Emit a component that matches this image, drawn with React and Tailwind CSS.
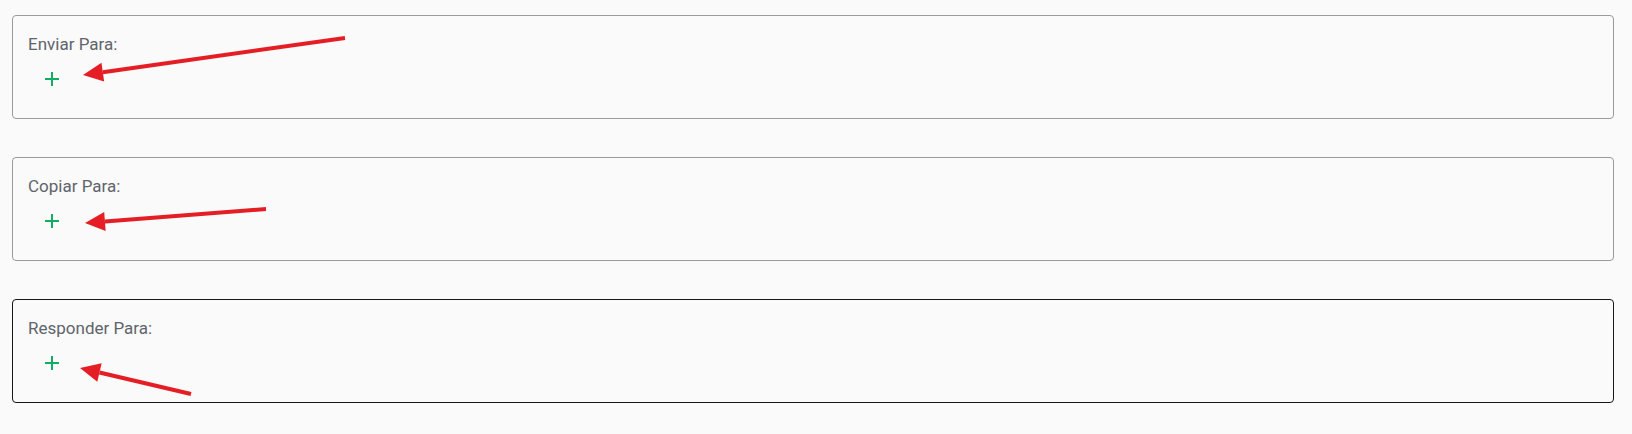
import React from "react";

const sections = [
  { label: "Enviar Para:", border: "border-[#9a9a9a]" },
  { label: "Copiar Para:", border: "border-[#9a9a9a]" },
  { label: "Responder Para:", border: "border-[#161616]" },
];

// red annotation arrows: [tailX, tailY, tipX, tipY]
const arrows = [
  [345, 38, 83, 75],
  [266, 209, 85, 223],
  [191, 394, 80, 368],
];

function Arrow({ a }) {
  const [tx, ty, hx, hy] = a;
  const dx = tx - hx;
  const dy = ty - hy;
  const len = Math.hypot(dx, dy);
  const ux = dx / len;
  const uy = dy / len;
  const bx = hx + ux * 20;
  const by = hy + uy * 20;
  const px = -uy * 9.5;
  const py = ux * 9.5;
  return (
    <g>
      <line x1={tx} y1={ty} x2={bx} y2={by} stroke="#e41e24" strokeWidth="4" />
      <polygon
        points={`${hx},${hy} ${bx + px},${by + py} ${bx - px},${by - py}`}
        fill="#e41e24"
      />
    </g>
  );
}

function PlusIcon() {
  return (
    <svg width="14" height="14" viewBox="0 0 14 14">
      <path d="M7 0v14M0 7h14" stroke="#12ad62" strokeWidth="2" />
    </svg>
  );
}

export default function App() {
  return (
    <div className="relative w-[1632px] h-[434px] bg-[#fafafa] font-['Roboto',sans-serif] overflow-hidden">
      <div className="flex flex-col gap-[38px] pt-[15px] pl-[12px] pr-[18px]">
        {sections.map((s) => (
          <div
            key={s.label}
            className={`h-[104px] rounded-[4px] border ${s.border} pt-[18px] px-[15px]`}
          >
            <div className="text-[17px] leading-[20px] text-[#60646b]">
              {s.label}
            </div>
            <button className="mt-[18px] ml-[17px] flex items-center justify-center w-[14px] h-[14px]">
              <PlusIcon />
            </button>
          </div>
        ))}
      </div>
      <svg
        className="absolute inset-0 pointer-events-none"
        width="1632"
        height="434"
      >
        {arrows.map((a, i) => (
          <Arrow key={i} a={a} />
        ))}
      </svg>
    </div>
  );
}
